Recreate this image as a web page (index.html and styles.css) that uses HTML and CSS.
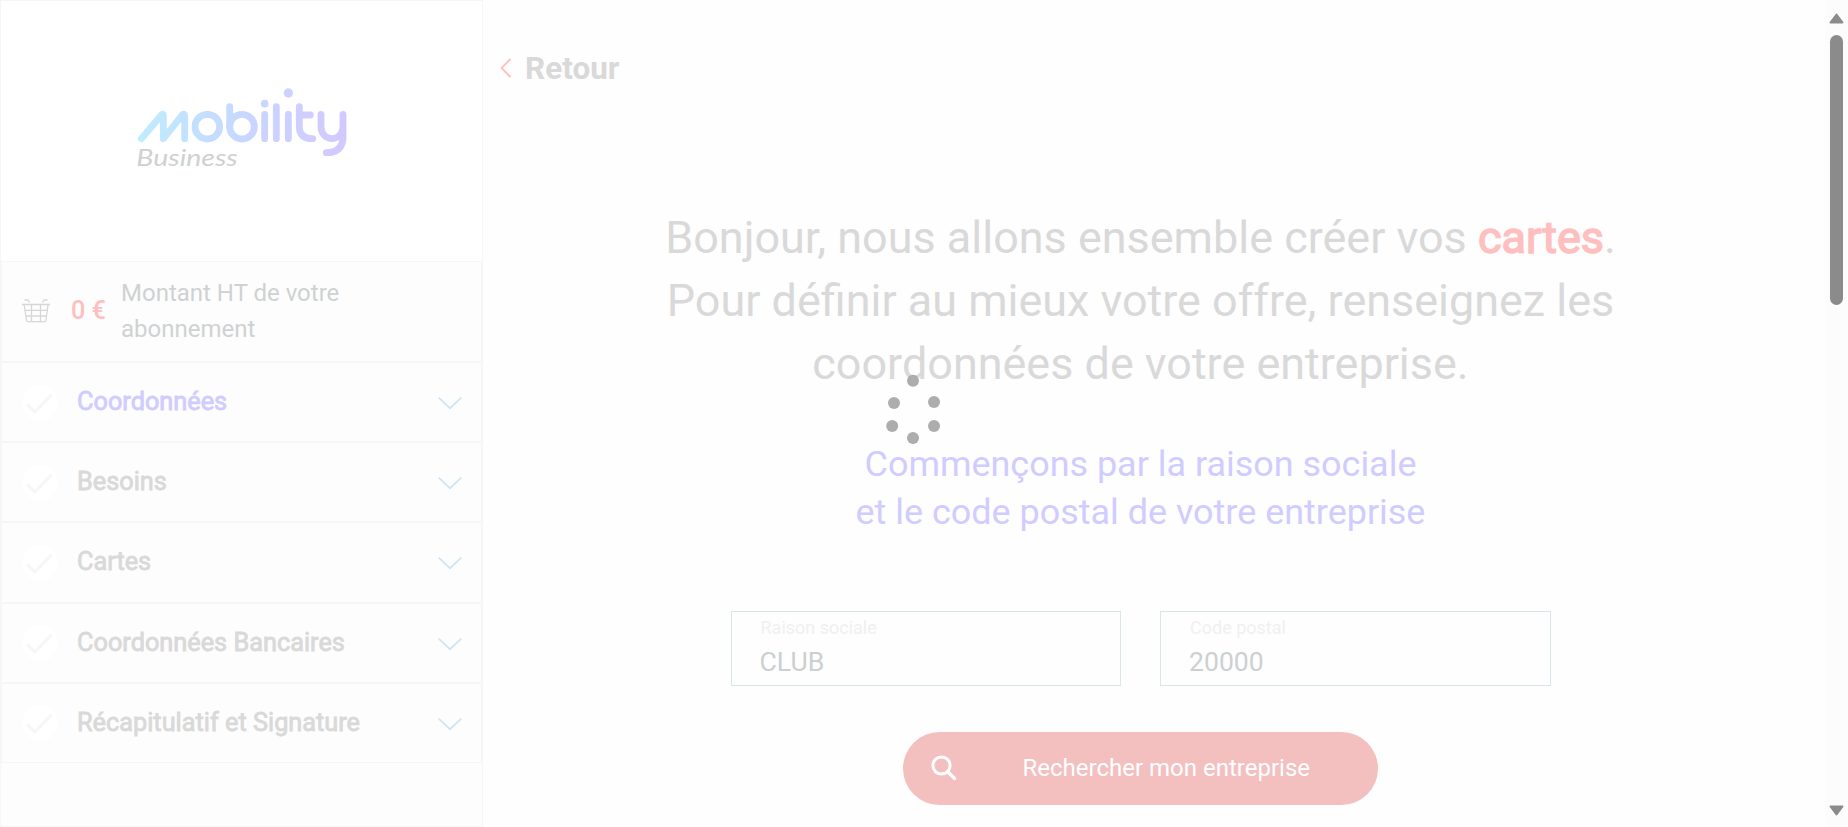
FILE: index.html
```html
<!DOCTYPE html>
<html lang="fr">
<head>
<meta charset="utf-8">
<title>Mobility Business</title>
<link rel="stylesheet" href="styles.css">
</head>
<body>
<svg class="defs" width="0" height="0">
  <symbol id="check" viewBox="0 0 36 36"><circle cx="18" cy="18" r="18" fill="#fff"/><path d="M5 19.500l8 7.500L29.500 9.700" fill="none" stroke="#f6f6f6" stroke-width="3"/></symbol>
  <symbol id="chevron" viewBox="0 0 24 13"><path d="M.7 .7L12 11.200 23.300 .7" fill="none" stroke="#cfe5f5" stroke-width="1.800"/></symbol>
</svg>
<div class="app">
  <aside class="sidebar">
    <div class="brand">
      <svg class="logo" viewBox="0 0 750 330" width="250" height="110">
        <defs><linearGradient id="g" gradientUnits="userSpaceOnUse" x1="54" y1="150" x2="680" y2="150"><stop offset="0" stop-color="#bfedff"/><stop offset=".28" stop-color="#c3e0ff"/><stop offset=".6" stop-color="#cad4ff"/><stop offset=".85" stop-color="#d1ccff"/><stop offset="1" stop-color="#d1c9ff"/></linearGradient></defs>
        <g fill="none" stroke="url(#g)" stroke-width="20.500" stroke-linecap="round" stroke-linejoin="round">
          <path d="M64 191L125 119Q130 115 130 122V191L188 119Q194 115 194 122V191"/>
          <circle cx="262" cy="155" r="37"/>
          <path d="M329 95V155"/><circle cx="366" cy="155" r="37"/>
          <path d="M434 118V191M434.100 191V190M469 95V191M469.100 191V190M505 118V191M505.100 191V190"/>
          <path d="M538 95V155Q538 191 578 191M538 120H571"/>
          <path d="M603 118V156A33 35 0 0 0 669 156V118M669 150V192Q664 233 619 233"/>
        </g>
        <circle cx="434" cy="86" r="11.500" fill="#cbd6ff"/><circle cx="505" cy="54" r="14" fill="#ced1ff"/>
        <text x="49" y="274" class="logo-sub" textLength="304" lengthAdjust="spacingAndGlyphs">Business</text>
      </svg>
    </div>
    <div class="cart">
      <svg class="basket" viewBox="0 0 28 24" width="28" height="24" fill="none" stroke="#d7d7d7" stroke-width="1.300"><path d="M0 5.500H28M2.200 6L4.500 21.500Q4.700 22.700 6 22.700H22.500Q23.800 22.700 24 21.500L26 6M3 11.300H25.500M4 17H25M9.500 6V22.500M18.500 6V22.500M2.500 1H6L7.500 3.500M25.500 1H22L20.500 3.500"/></svg>
      <strong class="price">0 €</strong>
      <span class="cart-label">Montant HT de votre abonnement</span>
    </div>
    <nav class="steps">
      <a class="step active"><svg class="tick"><use href="#check"/></svg><span>Coordonnées</span><svg class="chev"><use href="#chevron"/></svg></a>
      <a class="step"><svg class="tick"><use href="#check"/></svg><span>Besoins</span><svg class="chev"><use href="#chevron"/></svg></a>
      <a class="step"><svg class="tick"><use href="#check"/></svg><span>Cartes</span><svg class="chev"><use href="#chevron"/></svg></a>
      <a class="step"><svg class="tick"><use href="#check"/></svg><span>Coordonnées Bancaires</span><svg class="chev"><use href="#chevron"/></svg></a>
      <a class="step"><svg class="tick"><use href="#check"/></svg><span>Récapitulatif et Signature</span><svg class="chev"><use href="#chevron"/></svg></a>
    </nav>
  </aside>
  <main class="content">
    <a class="back"><svg width="12" height="20" viewBox="0 0 12 20"><path d="M10.500 1L1.500 10 10.500 19" fill="none" stroke="#ffbfbf" stroke-width="1.900"/></svg><span>Retour</span></a>
    <h1>Bonjour, nous allons ensemble créer vos <b>cartes</b>.<br>Pour définir au mieux votre offre, renseignez les<br>coordonnées de votre entreprise.</h1>
    <h2>Commençons par la raison sociale<br>et le code postal de votre entreprise</h2>
    <div class="fields">
      <label class="field"><span class="caption">Raison sociale</span><span class="value">CLUB</span></label>
      <label class="field"><span class="caption">Code postal</span><span class="value">20000</span></label>
    </div>
    <button class="search"><svg width="26" height="26" viewBox="0 0 26 26"><circle cx="10.500" cy="10.500" r="8.600" fill="none" stroke="#fff" stroke-width="3"/><path d="M17 17L23.500 23.500" stroke="#fff" stroke-width="3.400" stroke-linecap="round"/></svg><span>Rechercher mon entreprise</span></button>
  </main>
  <div class="scrollbar">
    <svg width="15" height="11" viewBox="0 0 15 11"><path d="M7.500 1.500L13.500 9.500H1.500Z" fill="#8b8b8b" stroke="#8b8b8b" stroke-width="2" stroke-linejoin="round"/></svg>
    <div class="thumb"></div>
    <svg width="15" height="11" viewBox="0 0 15 11"><path d="M7.500 9.500L13.500 1.500H1.500Z" fill="#8b8b8b" stroke="#8b8b8b" stroke-width="2" stroke-linejoin="round"/></svg>
  </div>
</div>
<svg class="loader" width="60" height="76" viewBox="883 372 60 76" fill="#adadad"><circle cx="913" cy="380.700" r="6"/><circle cx="894" cy="403" r="6"/><circle cx="934" cy="402" r="6"/><circle cx="892.200" cy="426" r="6"/><circle cx="934" cy="426" r="6"/><circle cx="913" cy="438" r="6"/></svg>
</body>
</html>
```
FILE: styles.css
```css
* { box-sizing: border-box; }
body { margin: 0; background: #fefefe; font-family: Roboto, "Liberation Sans", sans-serif; color: #d9d9d9; overflow: hidden; }
.defs { position: absolute; }
.app { display: flex; width: 1848px; height: 827px; }
.sidebar { width: 483px; height: 827px; flex: none; border: 1px solid #f6f6f6; background: #fdfdfd; }
.brand { height: 260px; background: #fff; padding: 74px 0 0 119px; }
.logo { display: block; }
.logo-sub { font: italic 400 69px Lato, sans-serif; fill: #cfd1d1; }
.cart { display: flex; align-items: center; height: 101px; border: 1px solid #f6f6f6; padding: 0 20px 2px; }
.basket { flex: none; }
.price { margin-left: 21px; width: 50px; font-size: 25.2px; font-weight: 500; color: #ffbfbf; white-space: nowrap; }
.cart-label { width: 260px; font-size: 24px; line-height: 36px; color: #cfd2d2; }
.step { display: flex; align-items: center; height: 80.2px; border: 1px solid #f6f6f6; padding: 0 19px 0 20px; font-size: 25.3px; -webkit-text-stroke: .8px; }
.step span { flex: 1; margin-left: 19px; padding-bottom: 1px; white-space: nowrap; }
.active { color: #d0ccff; }
.tick { width: 36px; height: 36px; margin-top: 1px; }
.chev { width: 24px; height: 13px; margin-top: 3px; }
.content { flex: 1; padding: 46px 27px 0 0; display: flex; flex-direction: column; align-items: center; }
.back { align-self: flex-start; margin-left: 17px; display: flex; align-items: center; gap: 13px; height: 44px; font-size: 31.5px; font-weight: 700; }
h1, h2 { margin: 0; font-weight: 400; text-align: center; white-space: nowrap; }
h1 { margin-top: 116px; font-size: 44.95px; line-height: 63px; }
h1 b { font-weight: 400; color: #ffbfbf; -webkit-text-stroke: 1.5px; }
h2 { margin-top: 45px; font-size: 35.95px; line-height: 48px; color: #d0ccff; }
.fields { margin-top: 75px; display: flex; gap: 39px; }
.field { width: 390.5px; height: 75px; border: 1px solid #d9e5e9; padding: 4px 28px; display: flex; flex-direction: column; }
.caption { font-size: 18px; line-height: 24px; color: #f0f0f0; padding-left: 1px; }
.value { font-size: 26.6px; line-height: 34px; color: #ccd0d1; margin-top: 5px; }
.search { margin-top: 46px; width: 475px; height: 73px; border: 0; border-radius: 37px; background: #f3bfbf; color: #fff; padding: 0 0 1px 28px; display: flex; align-items: center; font: 24px Roboto, sans-serif; }
.search span { margin-left: 65.5px; }
.scrollbar { width: 23px; background: #fcfcfc; display: flex; flex-direction: column; align-items: center; padding: 13px 0 11px; }
.thumb { width: 13px; height: 270px; border-radius: 7px; background: #8b8b8b; margin: 11px 0 auto; }
.loader { position: absolute; left: 883px; top: 372px; }
```
